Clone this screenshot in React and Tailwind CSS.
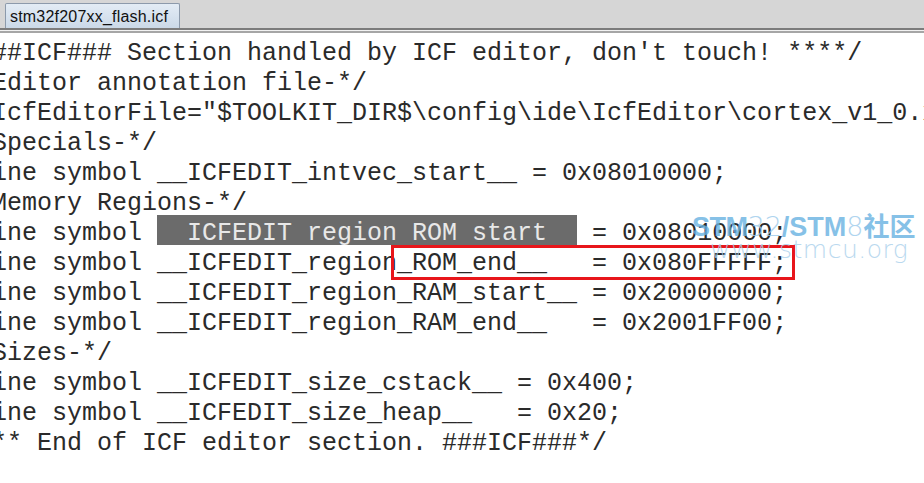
import React from "react";

const lines = [
  "##ICF### Section handled by ICF editor, don't touch! ****/",
  "Editor annotation file-*/",
  'IcfEditorFile="$TOOLKIT_DIR$\\config\\ide\\IcfEditor\\cortex_v1_0.xml" */',
  "Specials-*/",
  "ine symbol __ICFEDIT_intvec_start__ = 0x08010000;",
  "Memory Regions-*/",
  null,
  "ine symbol __ICFEDIT_region_ROM_end__   = 0x080FFFFF;",
  "ine symbol __ICFEDIT_region_RAM_start__ = 0x20000000;",
  "ine symbol __ICFEDIT_region_RAM_end__   = 0x2001FF00;",
  "Sizes-*/",
  "ine symbol __ICFEDIT_size_cstack__ = 0x400;",
  "ine symbol __ICFEDIT_size_heap__   = 0x20;",
  "** End of ICF editor section. ###ICF###*/",
];

export default function App() {
  return (
    <div className="relative w-[924px] h-[483px] overflow-hidden bg-white">
      {/* tab bar */}
      <div className="h-[28px] bg-[#d6d6d6] flex items-end pl-[5px]">
        <div className="h-[25px] w-[175px] border border-b-0 border-[#8c9aab] rounded-t-[2px] bg-gradient-to-b from-[#e3ecf5] to-[#cbd9e8] flex items-center pl-[4px] pt-[1px]">
          <span className="text-[16px] text-[#111] font-['Liberation_Sans',sans-serif] leading-none tracking-[0.2px]">
            stm32f207xx_flash.icf
          </span>
        </div>
      </div>
      <div className="h-[2px] bg-[#7c7c7c]" />
      <div className="h-[1px] bg-[#f2f2f2]" />
      <div className="h-[2px] bg-[#a6a6a6]" />
      {/* code */}
      <div className="relative pt-[6px]">
        <pre className="ml-[-8px] font-['Courier_New','Nimbus_Mono_PS','FreeMono','Liberation_Mono',monospace] text-[25px] leading-[30px] text-[#2a2a2a] whitespace-pre">
          {lines.map((l, i) =>
            l === null ? (
              <div key={i} className="h-[30px]">
                {"ine symbol "}
                <span className="relative top-[-4px] inline-block h-[30px] bg-[#6b6b6b] text-[#e8e8e8] align-top">
                  <span className="relative top-[4px]">{"  ICFEDIT region ROM start  "}</span>
                </span>
                {" = 0x08010000;"}
              </div>
            ) : (
              <div key={i} className="h-[30px]">
                {l}
              </div>
            )
          )}
        </pre>
        {/* red annotation box */}
        <div className="absolute left-[391px] top-[212px] w-[404px] h-[35px] border-[3px] border-[#e8161b]" />
      </div>
      {/* watermark */}
      <div className="absolute left-[692px] top-[210px] flex flex-col pointer-events-none opacity-80">
        <div className="flex items-baseline font-['Liberation_Sans',sans-serif] text-[27px] leading-[30px] text-[#69b2e2] whitespace-nowrap">
          <span className="font-bold tracking-[-0.5px]">STM</span>
          <span className="font-['DejaVu_Sans',sans-serif] font-extralight text-[#9ccbec]">32</span>
          <span className="font-bold">/STM</span>
          <span className="font-['DejaVu_Sans',sans-serif] font-extralight text-[#9ccbec]">8</span>
          <span className="font-bold font-['Noto_Sans_CJK_SC',sans-serif] text-[26px]">社区</span>
        </div>
        <div className="ml-[18px] mt-[-6px] font-['DejaVu_Sans',sans-serif] font-extralight text-[25px] leading-[28px] text-[#a9d0ec] tracking-[0.5px] whitespace-nowrap">
          www.stmcu.org
        </div>
      </div>
    </div>
  );
}
